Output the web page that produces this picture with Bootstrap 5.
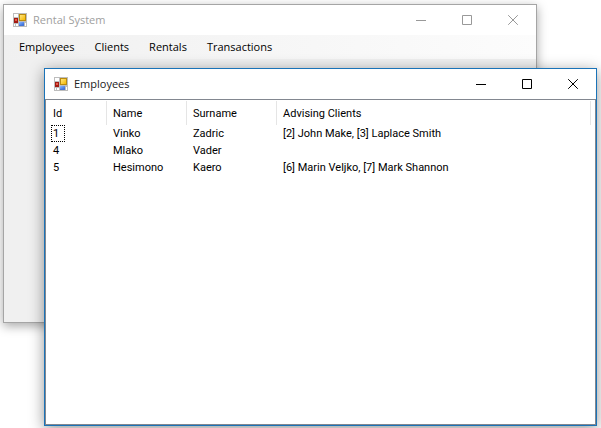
<!DOCTYPE html>
<html lang="en">
<head>
<meta charset="utf-8">
<meta name="viewport" content="width=device-width, initial-scale=1">
<title>Rental System</title>
<link href="https://cdn.jsdelivr.net/npm/bootstrap@5.3.0/dist/css/bootstrap.min.css" rel="stylesheet">
<style>
  body { font-family: "Open Sans", "Noto Sans", sans-serif; font-size: 11px; line-height: 16px; }
  .desktop { min-height: 100vh; }
  .window { display: flex; flex-direction: column; border: 1px solid; }
  .window-main { inset: 4px 64px 105px 3px; border-color: #a5a5a5; background: #f0f0f0; box-shadow: 0 3px 10px rgba(0,0,0,.35); }
  .window-child { inset: 68px 4px 2px 44px; border-color: #1a73b8; background: #fff; box-shadow: 0 3px 14px rgba(0,0,0,.42); }
  .title-bar { height: 30px; padding-left: 9px; background: #fff; color: #222; }
  .window-main .title-bar { color: #a0a0a0; }
  .title-text { font-size: 11px; font-weight: 400; line-height: 16px; margin: 0 0 0 6px; }
  .caption-btn { width: 46px; height: 28px; padding: 0 0 0 1px; border: 0; background: none; color: #000; display: flex; align-items: center; justify-content: center; }
  .window-main .caption-btn { color: #999; }
  .menu-strip { height: 24px; padding-left: 15px; gap: 20px; background: linear-gradient(90deg, #f0f0f0, #fcfcfc); }
  .menu-strip a { color: #000; text-decoration: none; }
  .list-view { border: 1px solid #828790; font-family: Roboto, "Liberation Sans", sans-serif; font-size: 11px; color: #000; padding-right: 4px; }
  .list-grid { width: 100%; table-layout: fixed; line-height: 17px; }
  .list-grid th { font-weight: 400; height: 25px; padding: 1px 6px 0; }
  .list-grid th { background: linear-gradient(#e5e5e5, #e5e5e5) right 1px / 1px 24px no-repeat; }
  .list-grid td { height: 17px; padding: 0 6px; white-space: nowrap; }
  .col-id { width: 61px; } .col-first { width: 80px; } .col-last { width: 90px; }
  .list-grid th:first-child { padding-left: 7px; }
  .list-grid td:first-child { padding-left: 5px; }
  .cell-id { display: block; width: 14px; padding-left: 2px; line-height: 17px; }
  .cell-focus { outline: 1px dotted #000; outline-offset: -1px; }
</style>
<script src="https://cdn.jsdelivr.net/npm/bootstrap@5.3.0/dist/js/bootstrap.bundle.min.js"></script>
</head>
<body>
<svg width="0" height="0" class="position-absolute" aria-hidden="true">
  <defs>
    <linearGradient id="gold" x2="1" y2="1"><stop stop-color="#ffe680"/><stop offset="1" stop-color="#f5b800"/></linearGradient>
    <linearGradient id="blue" x2="1" y2="1"><stop stop-color="#8db8ff"/><stop offset="1" stop-color="#3268d8"/></linearGradient>
    <symbol id="form-icon" viewBox="0 0 14 14">
      <path fill="#bdbdbd" d="M0 0h14v14H0z"/>
      <path fill="#fff" d="M1 1h4v3H1zM1 11h1v2H1zM3 11h2v2H3zM12 10h1v3h-1z"/>
      <path fill="#a21a12" d="M1 5h4v5H1z"/><path fill="#e65b48" d="M2 6h2v2H2z"/>
      <path fill="#b88a10" d="M6 1h7v7H6z"/><path fill="url(#gold)" d="M7 2h5v5H7z"/>
      <path fill="#4775d4" d="M6 9h5v4H6z"/><path fill="url(#blue)" d="M6 9h5v3H6z"/>
    </symbol>
    <symbol id="minimize" viewBox="0 0 11 11"><path d="M0 5h10v1H0z" fill="currentColor"/></symbol>
    <symbol id="maximize" viewBox="0 0 11 11"><path d="M.5 .5h9v9h-9z" fill="none" stroke="currentColor"/></symbol>
    <symbol id="close" viewBox="0 0 11 11"><path d="M.2.2l9.6 9.6M9.8.2L.2 9.8" fill="none" stroke="currentColor"/></symbol>
  </defs>
</svg>
<main class="desktop position-relative overflow-hidden">
  <section class="window window-main position-absolute" aria-label="Rental System">
    <header class="title-bar d-flex align-items-center">
      <svg width="14" height="14" aria-hidden="true"><use href="#form-icon"/></svg>
      <h1 class="title-text flex-grow-1">Rental System</h1>
      <button type="button" class="caption-btn" aria-label="Minimize"><svg width="11" height="11"><use href="#minimize"/></svg></button>
      <button type="button" class="caption-btn" aria-label="Maximize"><svg width="11" height="11"><use href="#maximize"/></svg></button>
      <button type="button" class="caption-btn" aria-label="Close"><svg width="11" height="11"><use href="#close"/></svg></button>
    </header>
    <nav class="menu-strip d-flex align-items-center">
      <a href="#">Employees</a>
      <a href="#">Clients</a>
      <a href="#">Rentals</a>
      <a href="#">Transactions</a>
    </nav>
  </section>

  <section class="window window-child position-absolute" aria-label="Employees">
    <header class="title-bar d-flex align-items-center">
      <svg width="14" height="14" aria-hidden="true"><use href="#form-icon"/></svg>
      <h2 class="title-text flex-grow-1">Employees</h2>
      <button type="button" class="caption-btn" aria-label="Minimize"><svg width="11" height="11"><use href="#minimize"/></svg></button>
      <button type="button" class="caption-btn" aria-label="Maximize"><svg width="11" height="11"><use href="#maximize"/></svg></button>
      <button type="button" class="caption-btn" aria-label="Close"><svg width="11" height="11"><use href="#close"/></svg></button>
    </header>
    <div class="list-view flex-grow-1">
      <table class="list-grid">
        <colgroup><col class="col-id"><col class="col-first"><col class="col-last"><col></colgroup>
        <thead>
          <tr><th scope="col">Id</th><th scope="col">Name</th><th scope="col">Surname</th><th scope="col">Advising Clients</th></tr>
        </thead>
        <tbody>
          <tr><td><span class="cell-id cell-focus">1</span></td><td>Vinko</td><td>Zadric</td><td>[2] John Make, [3] Laplace Smith</td></tr>
          <tr><td><span class="cell-id">4</span></td><td>Mlako</td><td>Vader</td><td></td></tr>
          <tr><td><span class="cell-id">5</span></td><td>Hesimono</td><td>Kaero</td><td>[6] Marin Veljko, [7] Mark Shannon</td></tr>
        </tbody>
      </table>
    </div>
  </section>
</main>
</body>
</html>
